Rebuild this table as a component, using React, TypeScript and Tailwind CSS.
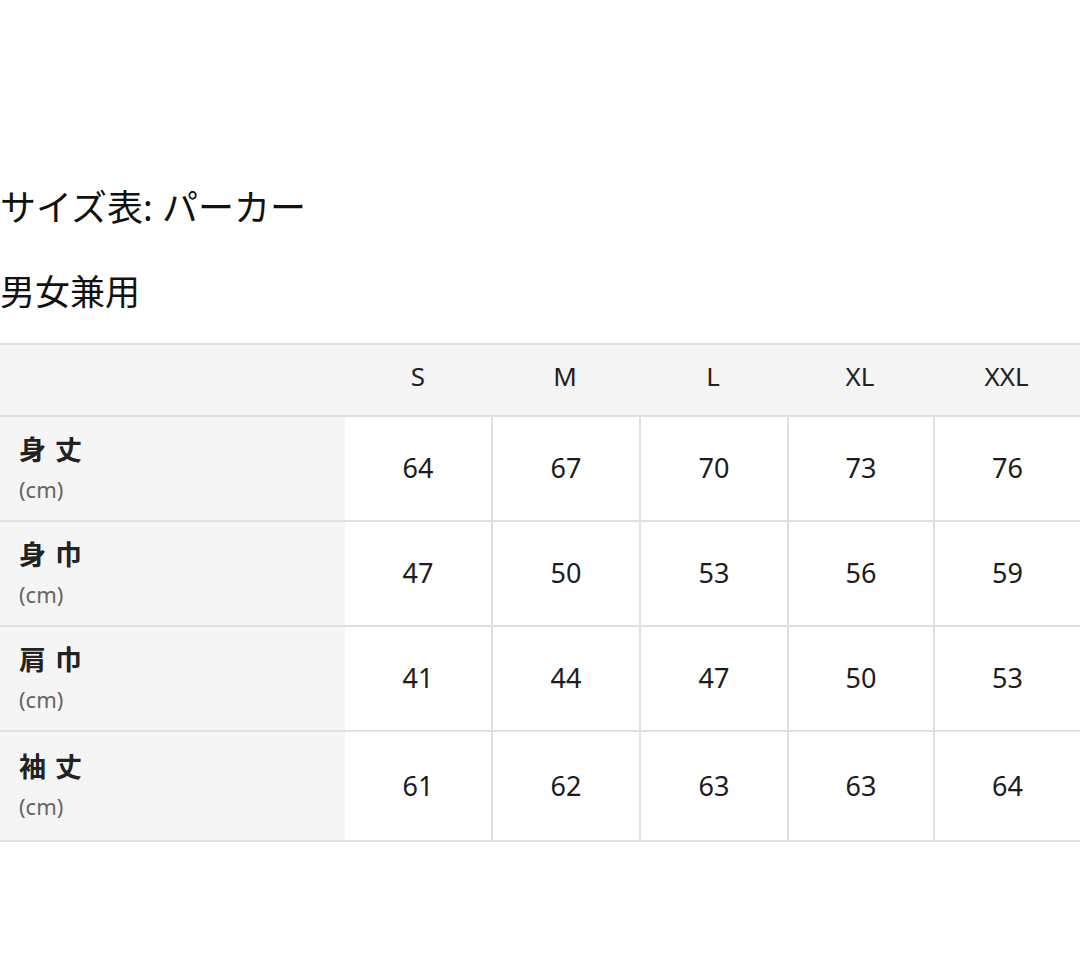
const sizes = ['S', 'M', 'L', 'XL', 'XXL']

const rows = [
  { label: '身 丈', values: [64, 67, 70, 73, 76], h: 'h-[105px]' },
  { label: '身 巾', values: [47, 50, 53, 56, 59], h: 'h-[105px]' },
  { label: '肩 巾', values: [41, 44, 47, 50, 53], h: 'h-[105px]' },
  { label: '袖 丈', values: [61, 62, 63, 63, 64], h: 'h-[110px]' },
]

const cols = 'grid grid-cols-[345px_146px_148px_148px_146px_1fr]'

export default function App() {
  return (
    <div className="h-[970px] w-[1080px] overflow-hidden bg-white font-['Noto_Sans','Noto_Sans_CJK_JP',sans-serif] text-[#111]">
      <div className="pt-[182px]">
        <h1 className="text-[36px] leading-[51px] font-normal">サイズ表: パーカー</h1>
        <p className="mt-[33px] text-[35px] leading-[51px]">男女兼用</p>
      </div>

      <div className="mt-[26px] border-t-2 border-[#e2e2e2]">
        <div className={`${cols} h-[70px] bg-[#f4f4f4]`}>
          <div />
          {sizes.map((s) => (
            <div key={s} className="flex items-center justify-center pb-[8px] text-[26px] text-[#222]">
              {s}
            </div>
          ))}
        </div>

        {rows.map((r) => (
          <div key={r.label} className={`${cols} ${r.h} border-t-2 border-[#e0e0e0]`}>
            <div className="flex flex-col justify-center bg-[#f5f5f5] pl-[19px]">
              <span className="text-[27px] leading-[36px] font-bold tracking-[1px] text-[#222]">{r.label}</span>
              <span className="mt-[4px] text-[22px] leading-[34px] text-[#666]">(cm)</span>
            </div>
            {r.values.map((v, i) => (
              <div
                key={i}
                className={`flex items-center justify-center text-[27px] text-[#1c1c1c] ${i > 0 ? 'border-l-2 border-[#e0e0e0]' : ''}`}
              >
                {v}
              </div>
            ))}
          </div>
        ))}
        <div className="border-t-2 border-[#e0e0e0]" />
      </div>
    </div>
  )
}
